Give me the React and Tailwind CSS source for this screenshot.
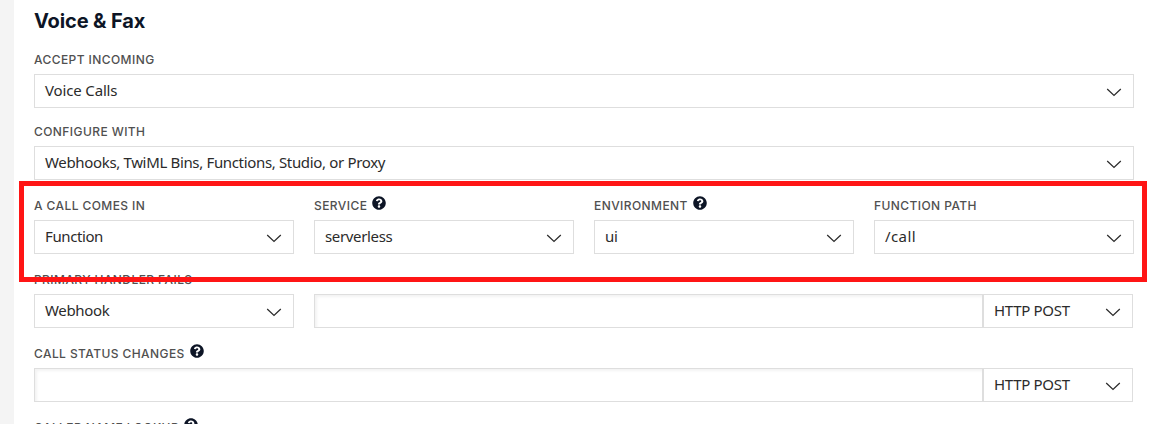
import React from "react";

function Chevron() {
  return (
    <svg className="h-[9px] w-4 shrink-0" viewBox="0 0 16 9" fill="none" stroke="#2b2b2b" strokeWidth="1.25">
      <path d="M1.2 1 8 7.5 14.8 1" />
    </svg>
  );
}

function Help() {
  return (
    <svg className="-mt-[6px] ml-[5px] h-[14px] w-[14px] shrink-0" viewBox="0 0 512 512" fill="#0d1526">
      <path d="M504 256c0 137-111 248-248 248S8 393 8 256C8 119.100 119 8 256 8s248 111.100 248 248zM262.700 90c-54.500 0-89.300 23-116.500 63.800-3.500 5.300-2.400 12.400 2.700 16.300l34.700 26.300c5.200 3.900 12.600 3 16.700-2.100 17.900-22.700 30.100-35.800 57.300-35.800 20.400 0 45.700 13.100 45.700 33 0 15-12.400 22.700-32.500 34C247.100 238.500 216 254.900 216 296v4c0 6.600 5.400 12 12 12h56c6.600 0 12-5.400 12-12v-1.300c0-28.500 83.200-29.600 83.200-106.700 0-58-60.200-102-116.500-102zM256 338c-25.400 0-46 20.600-46 46s20.600 46 46 46 46-20.600 46-46-20.600-46-46-46z" />
    </svg>
  );
}

function Label({ children, help, className = "tracking-[0.42px]" }) {
  return (
    <div className="flex h-5 items-center">
      <span className={`whitespace-nowrap font-['Inter',sans-serif] text-[12px] leading-5 font-medium text-[#505050] ${className}`}>
        {children}
      </span>
      {help && <Help />}
    </div>
  );
}

function Select({ children, className = "", textClass = "tracking-[-0.34px]" }) {
  return (
    <div className={`flex h-[34px] items-center justify-between border border-[#dedede] bg-white pr-[11px] pl-[10px] ${className}`}>
      <span className={`-mt-[2px] whitespace-nowrap font-['Noto_Sans',sans-serif] text-[15px] leading-5 text-[#2b2b2b] ${textClass}`}>{children}</span>
      <span className="mt-[3px] flex"><Chevron /></span>
    </div>
  );
}

function UrlField() {
  return (
    <div className="mr-px flex flex-1">
      <input className="h-[34px] min-w-0 flex-1 border border-[#dedede] bg-white px-2 shadow-[inset_2px_2px_3px_rgba(0,0,0,0.05)] outline-none" />
      <Select className="w-[150px]" textClass="tracking-[-0.3px]">HTTP POST</Select>
    </div>
  );
}

export default function App() {
  return (
    <div className="relative flex h-[424px] w-[1171px] overflow-hidden bg-white">
      <div className="w-[14px] shrink-0 bg-[#f4f4f4]" />
      <main className="ml-5 flex w-[1100px] shrink-0 flex-col">
        <h2 className="mt-[9px] h-6 font-['Inter',sans-serif] text-[20px] leading-6 font-bold tracking-[-0.13px] text-[#0d1526]">Voice &amp; Fax</h2>
        <section className="mt-[17px] flex flex-col gap-1">
          <Label>ACCEPT INCOMING</Label>
          <Select textClass="tracking-[-0.15px]">Voice Calls</Select>
        </section>
        <section className="mt-[14px] flex flex-col gap-1">
          <Label>CONFIGURE WITH</Label>
          <Select>Webhooks, TwiML Bins, Functions, Studio, or Proxy</Select>
        </section>
        <section className="mt-4 grid grid-cols-4 gap-x-5">
          <div className="flex flex-col gap-1">
            <Label>A CALL COMES IN</Label>
            <Select textClass="tracking-[-0.4px]">Function</Select>
          </div>
          <div className="flex flex-col gap-1">
            <Label help>SERVICE</Label>
            <Select>serverless</Select>
          </div>
          <div className="flex flex-col gap-1">
            <Label help>ENVIRONMENT</Label>
            <Select>ui</Select>
          </div>
          <div className="flex flex-col gap-1">
            <Label>FUNCTION PATH</Label>
            <Select textClass="tracking-[0.4px]">/call</Select>
          </div>
        </section>
        <section className="mt-4 flex flex-col gap-1">
          <Label>PRIMARY HANDLER FAILS</Label>
          <div className="flex gap-5">
            <Select className="w-[260px]">Webhook</Select>
            <UrlField />
          </div>
        </section>
        <section className="mt-4 flex flex-col gap-1">
          <Label help>CALL STATUS CHANGES</Label>
          <div className="flex"><UrlField /></div>
        </section>
        <section className="mt-4">
          <Label help>CALLER NAME LOOKUP</Label>
        </section>
      </main>
      <div className="pointer-events-none absolute top-[181px] left-[19px] h-[101px] w-[1128px] border-5 border-[#ff1515]" />
    </div>
  );
}
